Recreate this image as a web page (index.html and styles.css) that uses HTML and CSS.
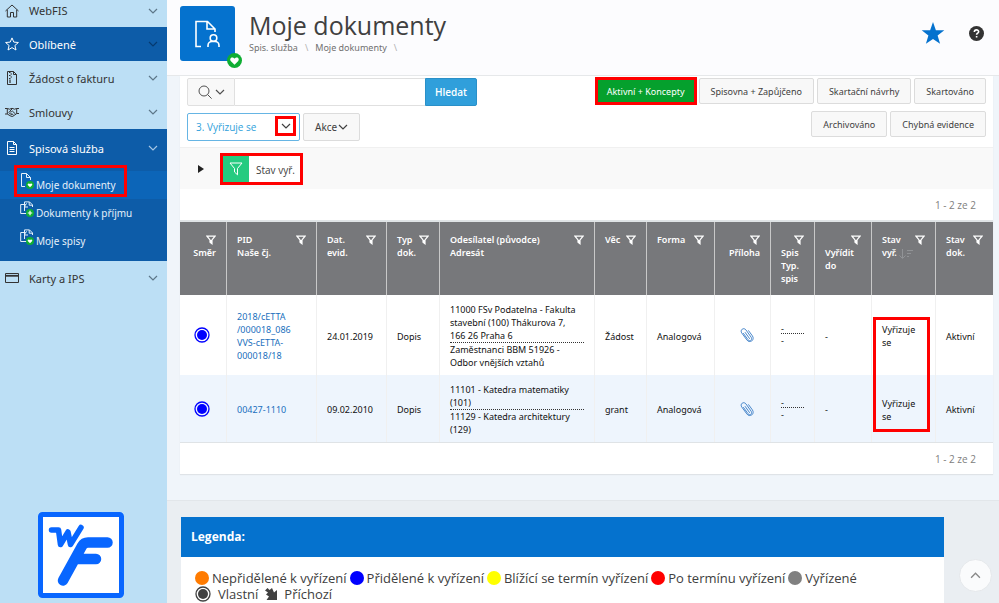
FILE: index.html
```html
<!DOCTYPE html>
<html lang="cs">
<head>
    <meta charset="UTF-8">
    <meta name="viewport" content="width=device-width, initial-scale=1.0">
    <title>Moje dokumenty</title>
    <link rel="stylesheet" href="styles.css">
</head>
<body>
    <!-- Shared icons -->
    <svg class="icon-defs" aria-hidden="true">
        <symbol id="i-chevron" viewBox="0 0 10 10"><path d="M1 3l4 4 4-4" fill="none" stroke="currentColor" stroke-width="1.2"/></symbol>
        <symbol id="i-filter" viewBox="0 0 10 10"><path d="M1 1.2h8L6 5v3.8L4 7.2V5z" fill="none" stroke="currentColor" stroke-width="1.2"/><path d="M4 5h2v3.8L4 7.2z" fill="currentColor"/></symbol>
        <symbol id="i-heart" viewBox="0 0 16 16"><circle cx="8" cy="8" r="8" fill="#0fae33"/><path d="M8 12.4L4 8.4C2.700 6.800 3.800 4.800 5.600 4.800 6.800 4.800 7.600 5.500 8 6.200 8.400 5.500 9.200 4.800 10.400 4.800 12.200 4.800 13.300 6.800 12 8.400z" fill="#fff"/></symbol>
        <symbol id="i-plus" viewBox="0 0 16 16"><circle cx="8" cy="8" r="8" fill="#0fae33"/><path d="M8 3.500v9M3.500 8h9" stroke="#fff" stroke-width="2.400"/></symbol>
        <symbol id="i-clip" viewBox="0 0 14 16"><path d="M3.500 6.500l4.500 6.200c.8 1.100 2 1.200 2.900.5.9-.7 1-1.900.3-2.900L6 3C5 1.600 3.400 1.300 2.200 2.200 1 3.100.8 4.600 1.700 5.900l5.100 7c1.300 1.800 3.400 2.200 5 1 1.600-1.200 1.800-3.300.6-5L8.600 3.700M9.500 11.500L5.200 5.500" fill="none" stroke="#4a88cc" stroke-width="1" stroke-linecap="round"/></symbol>
        <symbol id="i-own" viewBox="0 0 16 16"><circle cx="8" cy="8" r="7" fill="none" stroke="currentColor" stroke-width="1.300"/><circle cx="8" cy="8" r="5" fill="currentColor"/></symbol>
        <symbol id="i-docs" viewBox="0 0 14 14"><path d="M4 3.500H.7v9H8M4.500 10V.9h5l3 3V6M9.200 1v3.200h3.200M5 5.500v-1.500l2-1.500M4.500 6H8" fill="none" stroke="currentColor" stroke-width="1"/></symbol>
    </svg>

    <div class="app">
        <nav class="sidebar">
            <a class="nav-item first" href="#">
                <svg class="nav-icon" viewBox="0 0 14 14"><path d="M.5 7L7 1l6.500 6M2.300 5.800v7.200h3.200V8.500h3V13h3.200V5.800" fill="none" stroke="currentColor"/></svg>
                <span>WebFIS</span>
                <svg class="chevron"><use href="#i-chevron"/></svg>
            </a>
            <a class="nav-item active" href="#">
                <svg class="nav-icon" viewBox="0 0 14 14"><path d="M7 .9l1.800 4.200 4.600.4-3.500 3 1.100 4.500L7 10.600 3 13l1.100-4.500-3.500-3 4.600-.4z" fill="none" stroke="currentColor"/></svg>
                <span>Oblíbené</span>
                <svg class="chevron"><use href="#i-chevron"/></svg>
            </a>
            <a class="nav-item" href="#">
                <svg class="nav-icon" viewBox="0 0 14 14"><path d="M2.500.5h6l3 3v10h-9zM8.500.5v3h3" fill="none" stroke="currentColor"/><path d="M4 1.500h1.500M5.500 3H7M4 4.500h1.500M5.500 6H7M4 7.500h1.500M5 8.500v3.500" stroke="currentColor" stroke-width="1.200"/></svg>
                <span>Žádost o fakturu</span>
                <svg class="chevron"><use href="#i-chevron"/></svg>
            </a>
            <a class="nav-item" href="#">
                <svg class="nav-icon" viewBox="0 0 14 14"><path d="M0 3.500h2.500l2 .7 2.500-.9 2.500.9 2-.7H14M0 9h2.200l4 2.300c.7.300 1.200.3 1.800-.1l3.800-2.700H14M2.300 3.500V9M11.700 3.500v5M7 4L4.500 6.500c.8.800 1.700.5 2.800-.5l3.200 3M3.500 7.500l3.500 2.500M6.500 8.500l2 1.500" fill="none" stroke="currentColor"/></svg>
                <span>Smlouvy</span>
                <svg class="chevron"><use href="#i-chevron"/></svg>
            </a>
            <div class="nav-group">
                <a class="nav-item" href="#">
                    <svg class="nav-icon" viewBox="0 0 14 14"><path d="M2.500.5h6l3 3v10h-9zM8.500.5v3h3M4.500 6.500h5M4.500 8.500h5M4.500 10.500h5" fill="none" stroke="currentColor"/></svg>
                    <span>Spisová služba</span>
                    <svg class="chevron"><use href="#i-chevron"/></svg>
                </a>
                <a class="sub-item current" href="#">
                    <span class="sub-icon">
                        <svg viewBox="0 0 14 14"><path d="M5 13.500H1.500V.5h5l4 4V7M6.500.5v4h4" fill="none" stroke="currentColor"/></svg>
                        <svg class="mini-badge"><use href="#i-heart"/></svg>
                    </span>
                    <span>Moje dokumenty</span>
                </a>
                <a class="sub-item" href="#">
                    <span class="sub-icon">
                        <svg><use href="#i-docs"/></svg>
                        <svg class="mini-badge"><use href="#i-plus"/></svg>
                    </span>
                    <span>Dokumenty k příjmu</span>
                </a>
                <a class="sub-item" href="#">
                    <span class="sub-icon">
                        <svg><use href="#i-docs"/></svg>
                        <svg class="mini-badge"><use href="#i-heart"/></svg>
                    </span>
                    <span>Moje spisy</span>
                </a>
            </div>
            <a class="nav-item" href="#">
                <svg class="nav-icon" viewBox="0 0 14 14"><path d="M.5 2.500h13v9H.5z" fill="none" stroke="currentColor"/><path d="M0 4.800h14" stroke="currentColor" stroke-width="1.800"/></svg>
                <span>Karty a IPS</span>
                <svg class="chevron"><use href="#i-chevron"/></svg>
            </a>
            <svg class="logo" viewBox="0 0 86 86" role="img" aria-label="WebFIS">
                <rect x="2.500" y="2.500" width="81" height="81" rx="2" fill="#fff" stroke="#0866ff" stroke-width="5"/>
                <path d="M13.500 18h7l2 14.500L30 20l2.500 12.500L43 15.500" fill="none" stroke="#0866ff" stroke-width="5.500" stroke-linecap="round" stroke-linejoin="round"/>
                <path d="M69.500 30.500H50Q46 30.500 44 34L25 68.500M38 47h20" fill="none" stroke="#0866ff" stroke-width="10.500" stroke-linecap="round" stroke-linejoin="round"/>
            </svg>
        </nav>

        <main class="main">
            <header class="page-header">
                <div class="page-icon">
                    <svg class="doc-icon" viewBox="0 0 30 32"><path d="M8 28.500H3V3.500h11.500l7.500 7.500v3M14 3.500V11h8" fill="none" stroke="#fff" stroke-width="1.600"/><circle cx="20.500" cy="20" r="3.300" fill="none" stroke="#fff" stroke-width="1.600"/><path d="M15 29v-1.500c0-2.300 1.800-4 4-4h3c2.200 0 4 1.700 4 4V29" fill="none" stroke="#fff" stroke-width="1.600"/></svg>
                    <svg class="page-badge"><use href="#i-heart"/></svg>
                </div>
                <div class="page-title">
                    <h1>Moje dokumenty</h1>
                    <div class="breadcrumb">
                        <a href="#">Spis. služba</a><i>\</i><a href="#">Moje dokumenty</a><i>\</i>
                    </div>
                </div>
                <button class="icon-button" aria-label="Přidat k oblíbeným">
                    <svg class="star" viewBox="0 0 24 24"><path d="M12 0l3 8.600 8.800.1-7 5.500 2.600 8.600L12 17.700l-7.400 5.100 2.600-8.600-7-5.500 8.800-.1z" fill="#0572ce"/></svg>
                </button>
                <button class="icon-button" aria-label="Nápověda">
                    <svg class="help" viewBox="0 0 14 14"><circle cx="7" cy="7" r="7" fill="#333"/><path d="M5 5.500C5 3 9 3 9 5.300 9 6.700 7.100 6.700 7.100 8.200M7.100 9.300v1.500" fill="none" stroke="#fff" stroke-width="1.500"/></svg>
                </button>
            </header>

            <section class="report">
                <div class="toolbar">
                    <div class="toolbar-left">
                        <form class="search">
                            <button type="button" class="search-menu" aria-label="Vybrat sloupec">
                                <svg class="magnifier" viewBox="0 0 14 14"><circle cx="6" cy="6" r="5" fill="none" stroke="currentColor"/><path d="M9.600 9.600l4 4" stroke="currentColor"/></svg>
                                <svg class="chevron"><use href="#i-chevron"/></svg>
                            </button>
                            <input type="text" class="search-input" aria-label="Hledat">
                            <button type="button" class="search-go">Hledat</button>
                        </form>
                        <div class="controls">
                            <div class="saved">
                                <select aria-label="Uložené sestavy">
                                    <option>3. Vyřizuje se</option>
                                </select>
                                <span class="saved-arrow marked"><svg class="chevron"><use href="#i-chevron"/></svg></span>
                            </div>
                            <button class="btn actions">Akce <svg class="chevron"><use href="#i-chevron"/></svg></button>
                        </div>
                    </div>
                    <div class="toolbar-right">
                        <div class="button-row">
                            <button class="btn green marked">Aktivní + Koncepty</button>
                            <button class="btn">Spisovna + Zapůjčeno</button>
                            <button class="btn">Skartační návrhy</button>
                            <button class="btn">Skartováno</button>
                        </div>
                        <div class="button-row">
                            <button class="btn">Archivováno</button>
                            <button class="btn">Chybná evidence</button>
                        </div>
                    </div>
                </div>

                <div class="filter-bar">
                    <button class="expand" aria-label="Rozbalit filtry"></button>
                    <button class="filter-chip marked">
                        <span class="chip-icon"><svg viewBox="0 0 14 14"><path d="M1 1h12L8.500 6.500v6.300L5.500 10V6.500z" fill="none" stroke="currentColor"/></svg></span>
                        <span class="chip-label">Stav vyř.</span>
                    </button>
                </div>

                <div class="pagination">1 - 2 ze 2</div>

                <div class="table-wrap">
                    <table class="documents">
                        <colgroup>
                            <col class="c-dir"><col class="c-pid"><col class="c-date"><col class="c-type"><col><col class="c-subject">
                            <col class="c-form"><col class="c-attach"><col class="c-file"><col class="c-due"><col class="c-state"><col class="c-docstate">
                        </colgroup>
                        <thead>
                            <tr>
                                <th class="right"><svg class="filter"><use href="#i-filter"/></svg><br>Směr</th>
                                <th><svg class="filter"><use href="#i-filter"/></svg>PID<br>Naše čj.</th>
                                <th><svg class="filter"><use href="#i-filter"/></svg>Dat.<br>evid.</th>
                                <th><svg class="filter"><use href="#i-filter"/></svg>Typ<br>dok.</th>
                                <th><svg class="filter"><use href="#i-filter"/></svg>Odesílatel (původce)<br>Adresát</th>
                                <th><svg class="filter"><use href="#i-filter"/></svg>Věc</th>
                                <th><svg class="filter"><use href="#i-filter"/></svg>Forma</th>
                                <th class="right"><svg class="filter"><use href="#i-filter"/></svg><br>Příloha</th>
                                <th><svg class="filter"><use href="#i-filter"/></svg><br>Spis<br>Typ.<br>spis</th>
                                <th><svg class="filter"><use href="#i-filter"/></svg><br>Vyřídit<br>do</th>
                                <th><svg class="filter"><use href="#i-filter"/></svg>Stav<br>vyř. <svg class="sort" viewBox="0 0 14 10"><path d="M3.500 0v9M.5 6.500l3 3 3-3M8 1.500h6M8 4.500h4M8 7.500h2" fill="none" stroke="#919396"/></svg></th>
                                <th><svg class="filter"><use href="#i-filter"/></svg>Stav<br>dok.</th>
                            </tr>
                        </thead>
                        <tbody>
                            <tr>
                                <td class="direction"><svg class="own"><use href="#i-own"/></svg></td>
                                <td><a href="#">2018/cETTA<br>/000018_086<br>VVS-cETTA-<br>000018/18</a></td>
                                <td>24.01.2019</td>
                                <td>Dopis</td>
                                <td><div class="upper">11000 FSv Podatelna - Fakulta<br>stavební (100) Thákurova 7,<br>166 26 Praha 6</div>Zaměstnanci BBM 51926 -<br>Odbor vnějších vztahů</td>
                                <td>Žádost</td>
                                <td>Analogová</td>
                                <td class="attachment"><svg class="clip"><use href="#i-clip"/></svg></td>
                                <td><div class="upper dash">-</div>-</td>
                                <td>-</td>
                                <td>Vyřizuje<br>se</td>
                                <td>Aktivní</td>
                            </tr>
                            <tr>
                                <td class="direction"><svg class="own"><use href="#i-own"/></svg></td>
                                <td><a href="#">00427-1110</a></td>
                                <td>09.02.2010</td>
                                <td>Dopis</td>
                                <td><div class="upper">11101 - Katedra matematiky<br>(101)</div>11129 - Katedra architektury<br>(129)</td>
                                <td>grant</td>
                                <td>Analogová</td>
                                <td class="attachment"><svg class="clip"><use href="#i-clip"/></svg></td>
                                <td><div class="upper dash">-</div>-</td>
                                <td>-</td>
                                <td>Vyřizuje<br>se</td>
                                <td>Aktivní</td>
                            </tr>
                        </tbody>
                    </table>
                    <div class="state-mark"></div>
                </div>

                <div class="pagination">1 - 2 ze 2</div>
            </section>

            <footer class="footer">
                <section class="legend">
                    <h2>Legenda:</h2>
                    <div class="legend-body">
                        <div class="legend-row">
                            <span class="dot orange"></span><span>Nepřidělené k vyřízení</span>
                            <span class="dot blue"></span><span>Přidělené k vyřízení</span>
                            <span class="dot yellow"></span><span>Blížící se termín vyřízení</span>
                            <span class="dot red"></span><span>Po termínu vyřízení</span>
                            <span class="dot gray"></span><span>Vyřízené</span>
                        </div>
                        <div class="legend-row second">
                            <svg class="legend-own"><use href="#i-own"/></svg><span>Vlastní</span>
                            <svg class="legend-in" viewBox="0 0 12 12"><path d="M0 2.500L2.500 0l2 2L7 0l2 4.500L12 2v10H1.500L4 8.500 1 6.500 3 4.500z" fill="currentColor"/></svg><span>Příchozí</span>
                        </div>
                    </div>
                </section>
            </footer>
        </main>
        <button class="to-top" aria-label="Nahoru"><svg viewBox="0 0 10 10"><path d="M1 7l4-4 4 4" fill="none" stroke="currentColor" stroke-width="1.200"/></svg></button>
    </div>
</body>
</html>
```
FILE: styles.css
```css
* {
    box-sizing: border-box;
}

body {
    margin: 0;
    font-family: "Open Sans", "Noto Sans", sans-serif;
    font-size: 10px;
    color: #404040;
    background: #f0f5fa;
}

a {
    color: inherit;
    text-decoration: none;
}

button, input, select {
    font: inherit;
    color: inherit;
    margin: 0;
}

button {
    cursor: pointer;
}

.icon-defs {
    display: none;
}

.app {
    display: flex;
    height: 100vh;
}

.marked {
    outline: 3px solid #f00;
}

.chevron {
    width: 10px;
    height: 10px;
    flex: none;
}

/* Sidebar */
.sidebar {
    display: flex;
    flex-direction: column;
    flex: none;
    width: 167px;
    background: #bcdff5;
    font-family: "Noto Sans", sans-serif;
    font-size: 11px;
    color: #333;
}

.nav-item {
    display: flex;
    align-items: center;
    height: 34px;
    padding: 0 9px 0 5px;
}

.nav-item.first {
    height: 27px;
    padding-bottom: 6px;
}

.nav-item span {
    flex: 1;
}

.nav-icon {
    width: 14px;
    height: 14px;
    margin-right: 10px;
}

.nav-item .chevron {
    color: #5d7789;
}

.nav-item.active, .nav-group {
    background: #0d5ca8;
    color: #fff;
}

.nav-item.active .chevron {
    color: #063a70;
}

.nav-group {
    padding-bottom: 6px;
}

.nav-group .chevron {
    color: #a5c6e4;
}

.nav-group .nav-item {
    height: 42px;
    padding-bottom: 4px;
}

.sub-item {
    display: flex;
    align-items: center;
    height: 28px;
    padding-left: 20px;
    font-size: 10px;
    color: #e5f0fa;
}

.sub-item.current {
    position: relative;
    background: #0c65b8;
}

.sub-item.current::after {
    content: "";
    position: absolute;
    top: -6px;
    left: 14px;
    width: 107px;
    height: 26px;
    border: 3px solid #f00;
}

.sub-icon {
    position: relative;
    width: 14px;
    height: 14px;
    margin: 0 2px 10px 0;
}

.sub-icon svg {
    display: block;
    width: 14px;
    height: 14px;
}

.sub-icon .mini-badge {
    position: absolute;
    right: 0;
    bottom: -2px;
    width: 8px;
    height: 8px;
}

.logo {
    width: 86px;
    height: 86px;
    margin: auto auto 5px 38px;
}

/* Header */
.main {
    flex: 1;
    min-width: 0;
    overflow: hidden;
}

.page-header {
    display: flex;
    align-items: center;
    height: 76px;
    padding: 0 15px 8px 13px;
    background: #fcfcfe;
    border-bottom: 1px solid #e6e8ea;
}

.page-icon {
    display: flex;
    align-items: center;
    justify-content: center;
    position: relative;
    width: 55px;
    height: 55px;
    background: #0572ce;
    border-radius: 3px;
}

.doc-icon {
    width: 30px;
    height: 32px;
}

.page-badge {
    position: absolute;
    right: -7px;
    bottom: -7px;
    width: 15px;
    height: 15px;
}

.page-title {
    flex: 1;
    padding: 0 0 5px 14px;
}

h1 {
    margin: 0;
    font-size: 25px;
    line-height: 34px;
    font-weight: 400;
}

.breadcrumb {
    font-family: "Noto Sans", sans-serif;
    font-size: 9px;
    line-height: 12px;
    color: #707070;
}

.breadcrumb i {
    margin: 0 7px;
    color: #b0b0b0;
    font-style: normal;
}

.icon-button {
    display: flex;
    padding: 0;
    margin-left: 24px;
    background: none;
    border: 0;
}

.star {
    width: 24px;
    height: 23px;
}

.help {
    width: 15px;
    height: 15px;
}

/* Report */
.report {
    margin: 0 6px 26px 13px;
    background: #fff;
    box-shadow: 0 1px 1px #dfe3e7;
}

.toolbar {
    display: flex;
    justify-content: space-between;
    height: 71px;
    padding: 2px 7px 0;
}

.toolbar-left {
    display: flex;
    flex-direction: column;
    gap: 7px;
}

.search, .controls, .button-row {
    display: flex;
}

.search button, .search input {
    height: 28px;
}

.search-menu {
    display: flex;
    align-items: center;
    justify-content: center;
    gap: 3px;
    width: 48px;
    padding: 0;
    background: #f8f8f8;
    border: 1px solid #e0e0e0;
    border-radius: 2px 0 0 2px;
    color: #505050;
}

.magnifier {
    width: 14px;
    height: 14px;
}

.search-input {
    width: 190px;
    border: 1px solid #e0e0e0;
    border-width: 1px 0;
}

.search-go {
    width: 52px;
    padding: 0;
    background: #309fdb;
    border: 1px solid #2a90c8;
    border-radius: 0 2px 2px 0;
    color: #fff;
    font-weight: 600;
}

.controls {
    gap: 3px;
}

.saved {
    position: relative;
}

.saved select {
    appearance: none;
    width: 113px;
    height: 28px;
    padding: 0 8px;
    background: #fff;
    border: 1px solid #66b5e4;
    border-radius: 2px;
    color: #309fdb;
}

.saved-arrow {
    display: flex;
    align-items: center;
    justify-content: center;
    position: absolute;
    top: 6px;
    right: 7px;
    width: 15px;
    height: 14px;
    pointer-events: none;
}

.btn {
    height: 26px;
    padding: 0 11px;
    background: #f8f8f8;
    border: 1px solid #dcdcdc;
    border-radius: 2px;
    font-family: "Noto Sans", sans-serif;
    font-size: 9px;
    white-space: nowrap;
}

.btn.actions {
    display: flex;
    align-items: center;
    gap: 1px;
    height: 28px;
    font-size: 10px;
}

.btn.green {
    height: 22px;
    padding: 0 8px;
    margin: 2px;
    background: #05a02d;
    border-color: #05a02d;
    border-radius: 0;
    color: #fff;
}

.toolbar-right {
    display: flex;
    flex-direction: column;
    gap: 7px;
}

.button-row {
    justify-content: flex-end;
    gap: 3px;
}

.filter-bar {
    display: flex;
    align-items: center;
    height: 42px;
    padding-left: 18px;
    background: #f9f9f9;
    border-top: 1px solid #f0f0f0;
}

.expand {
    width: 6px;
    height: 8px;
    margin-right: 19px;
    padding: 0;
    background: none;
    border: solid transparent;
    border-width: 4px 0 4px 6px;
    border-left-color: #222;
}

.filter-chip {
    display: flex;
    align-items: stretch;
    height: 26px;
    padding: 0;
    background: #fff;
    border: 0;
}

.chip-icon {
    display: flex;
    align-items: center;
    justify-content: center;
    width: 26px;
    background: #25cb80;
    color: #fff;
}

.chip-icon svg {
    width: 14px;
    height: 14px;
}

.chip-label {
    padding: 0 5px 0 7px;
    line-height: 28px;
}

.pagination {
    height: 31px;
    padding-right: 17px;
    line-height: 32px;
    text-align: right;
    color: #808080;
}

/* Table */
.table-wrap {
    position: relative;
}

.documents {
    width: 100%;
    table-layout: fixed;
    border-spacing: 0;
    border-top: 2px solid #e0e4e6;
    border-bottom: 1px solid #dfe3e6;
    font-family: "Noto Sans", sans-serif;
    font-size: 9px;
    line-height: 13px;
}

.c-dir { width: 47px; }
.c-pid { width: 90px; }
.c-date { width: 70px; }
.c-type { width: 53px; }
.c-subject { width: 52px; }
.c-form { width: 68px; }
.c-attach { width: 56px; }
.c-file { width: 44px; }
.c-due { width: 57px; }
.c-state { width: 64px; }
.c-docstate { width: 57px; }

.documents th {
    height: 73px;
    padding: 11px 10px 0;
    background: #77787b;
    border-right: 1px solid #c8c8c8;
    color: #fff;
    font-weight: 600;
    text-align: left;
    vertical-align: top;
    white-space: nowrap;
}

.documents th.right {
    text-align: right;
}

.filter {
    float: right;
    width: 10px;
    height: 10px;
    margin-top: 2px;
}

.sort {
    width: 14px;
    height: 10px;
    vertical-align: middle;
}

.documents td {
    height: 80px;
    padding: 2px 10px 0;
    border-right: 1px solid #f0f0f0;
    color: #111;
    white-space: nowrap;
}

.documents th:last-child, .documents td:last-child {
    border-right: 0;
}

.documents tbody tr:last-child td {
    height: 67px;
    background: #eef5fd;
}

.documents td.direction {
    padding: 0 3px 0 0;
    text-align: center;
}

.documents td.attachment {
    padding: 0 0 0 8px;
    text-align: center;
}

.documents td a {
    color: #1a6fbd;
}

.upper {
    border-bottom: 1px dotted #333;
}

.dash {
    line-height: 8px;
}

.own {
    width: 16px;
    height: 16px;
    color: #00f;
    vertical-align: middle;
}

.clip {
    width: 14px;
    height: 16px;
    vertical-align: middle;
}

.state-mark {
    position: absolute;
    top: 97px;
    right: 63px;
    width: 57px;
    height: 115px;
    border: 3px solid #f00;
}

/* Footer */
.footer {
    height: 160px;
    padding: 16px 55px 0 14px;
    background: #eaeef2;
    border-top: 1px solid #e2e6ea;
}

.legend {
    background: #fff;
}

.legend h2 {
    margin: 0;
    padding-left: 10px;
    background: #0572ce;
    color: #fff;
    font-size: 12px;
    line-height: 40px;
    font-weight: 700;
}

.legend-body {
    padding: 13px 14px;
    font-size: 13px;
    line-height: 16px;
}

.legend-row {
    display: flex;
    align-items: center;
    gap: 3px;
    white-space: nowrap;
}

.dot {
    width: 14px;
    height: 14px;
    border-radius: 50%;
}

.orange { background: #ff7b00; }
.blue { background: #00f; }
.yellow { background: #ff0; }
.red { background: #f00; }
.gray { background: #808080; }

.legend-row.second {
    gap: 7px;
}

.legend-own {
    width: 16px;
    height: 16px;
}

.legend-in {
    width: 12px;
    height: 12px;
}

.to-top {
    display: flex;
    align-items: center;
    justify-content: center;
    position: fixed;
    right: 7px;
    bottom: 11px;
    width: 33px;
    height: 33px;
    padding: 0;
    background: #fafbfc;
    border: 1px solid #e4e7ea;
    border-radius: 50%;
    color: #888;
}

.to-top svg {
    width: 11px;
    height: 11px;
}
```
